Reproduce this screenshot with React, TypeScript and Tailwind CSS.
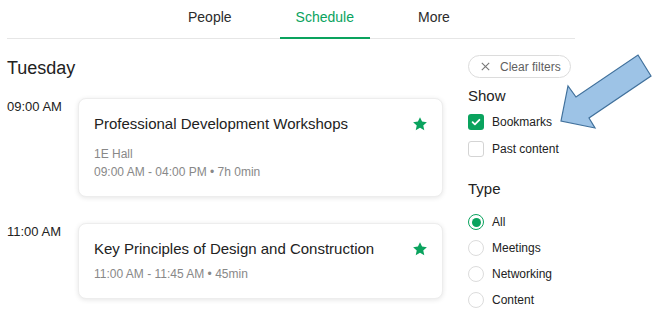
import React from "react";

const GREEN = "#0aa35e";

type Session = {
  time: string;
  title: string;
  location?: string;
  range: string;
};

const SESSIONS: Session[] = [
  {
    time: "09:00 AM",
    title: "Professional Development Workshops",
    location: "1E Hall",
    range: "09:00 AM - 04:00 PM • 7h 0min",
  },
  {
    time: "11:00 AM",
    title: "Key Principles of Design and Construction",
    range: "11:00 AM - 11:45 AM • 45min",
  },
];

const Star = () => (
  <svg width="16" height="16" viewBox="0 0 24 24" className="shrink-0 -mr-px">
    <path
      d="M12 1.8l3.1 6.6 7.2.8-5.4 4.9 1.5 7.1L12 17.6l-6.4 3.6 1.5-7.1L1.7 9.2l7.2-.8z"
      fill={GREEN}
    />
  </svg>
);

const Tab = ({ label, active }: { label: string; active?: boolean }) => (
  <div
    className={
      active
        ? "px-4 pt-[7px] pb-[10px] -mb-px border-b-2 border-[#0aa35e] text-[#0aa35e] text-[14px] leading-5"
        : "px-4 pt-[7px] pb-[10px] -mb-px border-b-2 border-transparent text-[#2b2b2b] text-[14px] leading-5"
    }
  >
    {label}
  </div>
);

const Checkbox = ({ label, checked }: { label: string; checked?: boolean }) => (
  <div className="flex items-center gap-[8px] h-4">
    {checked ? (
      <div className="w-4 h-4 rounded-[3px] bg-[#0aa35e] flex items-center justify-center">
        <svg width="10" height="10" viewBox="0 0 10 10">
          <path d="M1.6 5.2l2.3 2.2 4.5-4.6" stroke="#fff" strokeWidth="1.8" fill="none" strokeLinecap="round" strokeLinejoin="round" />
        </svg>
      </div>
    ) : (
      <div className="w-4 h-4 rounded-[3px] border border-[#d4d4d4] bg-white" />
    )}
    <span className="text-[12px] leading-4 text-[#222]">{label}</span>
  </div>
);

const Radio = ({ label, checked }: { label: string; checked?: boolean }) => (
  <div className="flex items-center gap-[8px] h-4">
    {checked ? (
      <div className="w-4 h-4 rounded-full border-[1.5px] border-[#0aa35e] flex items-center justify-center">
        <div className="w-[9px] h-[9px] rounded-full bg-[#0aa35e]" />
      </div>
    ) : (
      <div className="w-4 h-4 rounded-full border border-[#dcdcdc] bg-white" />
    )}
    <span className="text-[12px] leading-4 text-[#222]">{label}</span>
  </div>
);

export default function App() {
  return (
    <div className="relative w-[656px] h-[319px] overflow-hidden bg-white font-['Liberation_Sans',Arial,sans-serif] text-[#222]">
      <div className="ml-[7px] w-[568px]">
        {/* Tabs */}
        <div className="flex border-b border-[#e6e6e6]">
          <div className="ml-[165px] flex gap-8">
            <Tab label="People" />
            <Tab label="Schedule" active />
            <Tab label="More" />
          </div>
        </div>

        <div className="flex pt-[16px]">
          {/* Schedule list */}
          <div className="w-[436px]">
            <h1 className="pt-px text-[18px] leading-6 text-[#222]">Tuesday</h1>
            <div className="mt-[18px] flex flex-col gap-[26px]">
              {SESSIONS.map((s) => (
                <div key={s.time} className="flex">
                  <div className="w-[71px] shrink-0 text-[13px] leading-4 pt-px text-[#222]">{s.time}</div>
                  <div className="flex-1 rounded-lg border border-[#ededed] bg-white px-[15px] pt-[15px] pb-[15px] shadow-[0_1px_5px_rgba(0,0,0,0.10)]">
                    <div className="flex items-center justify-between">
                      <div className="text-[15px] leading-5 text-[#222]">{s.title}</div>
                      <Star />
                    </div>
                    <div className={s.location ? "mt-[11px] text-[12px] leading-[18px] text-[#888]" : "mt-[6px] text-[12px] leading-[18px] text-[#888]"}>
                      {s.location && <div>{s.location}</div>}
                      <div>{s.range}</div>
                    </div>
                  </div>
                </div>
              ))}
            </div>
          </div>

          {/* Filters */}
          <div className="ml-[25px] flex-1">
            <button className="h-[23px] flex items-center gap-[10px] rounded-full border border-[#dcdcdc] pl-[12px] pr-[9px] text-[12px] text-[#5f5f5f]">
              <svg width="9" height="9" viewBox="0 0 9 9">
                <path d="M0.8 0.8l7.4 7.4M8.2 0.8L0.8 8.2" stroke="#777" strokeWidth="1.1" />
              </svg>
              <span>Clear filters</span>
            </button>

            <div className="mt-[8px] text-[15px] leading-5 text-[#222]">Show</div>
            <div className="mt-[8px] flex flex-col gap-[11px]">
              <Checkbox label="Bookmarks" checked />
              <Checkbox label="Past content" />
            </div>

            <div className="mt-[22px] text-[15px] leading-5 text-[#222]">Type</div>
            <div className="mt-[15px] flex flex-col gap-[10px]">
              <Radio label="All" checked />
              <Radio label="Meetings" />
              <Radio label="Networking" />
              <Radio label="Content" />
            </div>
          </div>
        </div>
      </div>

      {/* Annotation arrow */}
      <svg className="absolute left-0 top-0 pointer-events-none" width="656" height="319" viewBox="0 0 656 319">
        <polygon
          points="638,55 651,76 589,118 595,128 561,121 568,86 576,97"
          fill="#9dc3e6"
          stroke="#41719c"
          strokeWidth="1.2"
          strokeLinejoin="miter"
        />
      </svg>
    </div>
  );
}
